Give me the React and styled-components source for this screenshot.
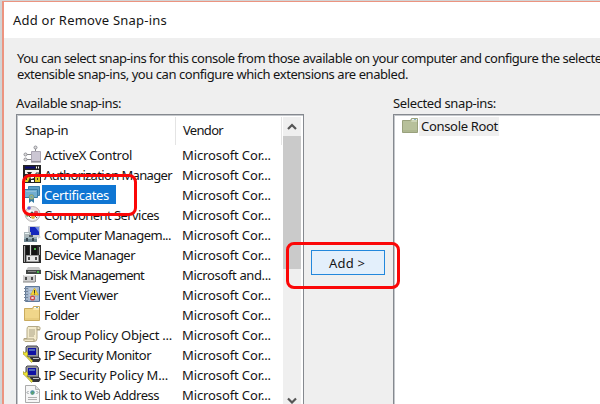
import React, { useLayoutEffect, useRef } from 'react';
import styled, { createGlobalStyle } from 'styled-components';

const GlobalStyle = createGlobalStyle`
  * { box-sizing: border-box; }
  body { margin: 0; background: #d4d4d4; overflow: hidden; }
`;

const Screen = styled.div`
  position: relative;
  width: 600px;
  height: 404px;
  overflow: hidden;
  padding: 1px 0 0 2px;
  background: #d2d4d5;
  font-family: 'Noto Sans', 'Open Sans', sans-serif;
  font-size: 13px;
  color: #151515;
`;

const Dialog = styled.main`
  display: flex;
  flex-direction: column;
  height: 403px;
  border: solid #ec9480;
  border-width: 1px 0 0 2px;
  background: #efefef;
`;

const TitleBar = styled.header`
  flex: none;
  height: 36px;
  padding: 9px 0 0 9px;
  background: #fff;
  line-height: 18px;
`;

const Intro = styled.section`
  flex: none;
  height: 57px;
  padding: 13px 0 0 13px;
  line-height: 15.5px;
`;

const Columns = styled.section`
  flex: 1;
  display: grid;
  grid-template-columns: 288px 89px 220px;
  padding-left: 12px;
  min-height: 0;
`;

const Column = styled.div`
  display: flex;
  flex-direction: column;
  min-height: 0;
`;

const Label = styled.div`
  flex: none;
  height: 19px;
  line-height: 17px;
`;

const ListBox = styled.div`
  flex: 1;
  display: flex;
  min-height: 0;
  overflow: hidden;
  border: solid #85898f;
  border-width: 1px 1px 0 1px;
  box-shadow: inset 1px 1px 0 #c5c8cc;
  background: #fff;
`;

const Table = styled.div`
  flex: none;
  width: 266px;
  padding-top: 2px;
`;

const HeaderRow = styled.div`
  display: grid;
  grid-template-columns: 159px 106px;
  height: 28px;
  line-height: 27px;
`;

const HeaderCell = styled.div`
  padding-left: ${(p) => p.$indent}px;
  border-right: 1px solid #e4e4e4;
`;

const Row = styled.div`
  display: grid;
  grid-template-columns: 19px 140px 1fr;
  height: 20px;
  padding-left: 6px;
  align-items: start;
  justify-items: start;
  line-height: 21px;
`;

const Name = styled.span`
  height: 19px;
  padding: 0 ${(p) => (p.$selected ? 7 : 0)}px 0 2px;
  color: ${(p) => (p.$selected ? '#fff' : 'inherit')};
  background: ${(p) => (p.$selected ? '#0f76d3' : 'transparent')};
`;

const Line = styled.span`
  display: inline-block;
  white-space: pre;
`;

const ScrollBar = styled.div`
  flex: none;
  width: 18px;
  height: 293px;
  margin-top: 2px;
  display: flex;
  flex-direction: column;
  background: #efefef;
`;

const ScrollArrow = styled.div`
  height: 19px;
  display: flex;
  align-items: center;
  justify-content: center;
`;

const Thumb = styled.div`
  height: 133px;
  margin-bottom: auto;
  background: #cacaca;
`;

const Actions = styled.div`
  padding: 155px 0 0 7px;
`;

const AddButton = styled.button`
  display: flex;
  align-items: center;
  justify-content: center;
  width: 74px;
  height: 25px;
  padding: 0 2px 0 0;
  border: 1px solid #2287dc;
  border-radius: 0;
  background: #e3effb;
  font: inherit;
  color: inherit;
`;

const TreeItem = styled.div`
  display: flex;
  height: 19px;
  margin: 2px 0 0 7px;
`;

const TreeLabel = styled.span`
  width: 80px;
  padding-left: 2px;
  line-height: 19px;
  background: #efefef;
`;

const Callout = styled.div`
  position: absolute;
  left: ${(p) => p.$x}px;
  top: ${(p) => p.$y}px;
  width: ${(p) => p.$w}px;
  height: ${(p) => p.$h}px;
  border: 3px solid #fb0707;
  border-radius: 8px;
  pointer-events: none;
`;

const Glyph = styled.svg`
  display: block;
  width: 18px;
  height: 18px;
`;

/* Tracks the text so that it fills the given width. */
function Fit({ width, children }) {
  const ref = useRef(null);
  useLayoutEffect(() => {
    const el = ref.current;
    el.style.letterSpacing = '0px';
    const natural = el.getBoundingClientRect().width;
    el.style.letterSpacing = `${(width - natural) / el.textContent.length}px`;
  }, [width, children]);
  return <Line ref={ref}>{children}</Line>;
}

const ActiveX = () => (
  <Glyph viewBox="0 0 18 18">
    <path d="M12.5 3v4M4 9.500h5M4 14.500h5" stroke="#858589" fill="none" />
    <circle cx="12.500" cy="2.500" r="1.500" fill="#ddd" stroke="#929298" />
    <circle cx="2.500" cy="9.500" r="1.500" fill="#ddd" stroke="#929298" />
    <circle cx="2.500" cy="14.500" r="1.500" fill="#ddd" stroke="#929298" />
    <path d="M8.500 6.500h9v10h-9z" fill="#cbc6d3" stroke="#aaa5b2" />
    <path d="M8 17h10" stroke="#77737c" />
  </Glyph>
);

const Authorization = () => (
  <Glyph viewBox="0 0 18 18">
    <path d="M0 0h18v18H0z" fill="#242424" />
    <path d="M2 5h14v4H2z" fill="#f3f3ed" />
    <path d="M2 1.500h10v2H2z" fill="#090975" />
    <path d="M13 1.500h1v2h-1zM15 1.500h1v2h-1z" fill="#fff" />
    <path d="M4 7h5l-2 3h3l-3 2z" fill="#222" />
    <path d="M1 12l4-2 2 2-2 5H2zM12 11h5v6h-5z" fill="#dec928" />
    <path d="M7 11l4-1v3l-3 1zM8 15h3v2H8z" fill="#fff" />
    <path d="M13 11V8h3v3" fill="none" stroke="#333" />
    <path d="M14 13h1v2h-1zM3 13h1v2H3z" fill="#333" />
  </Glyph>
);

const Certificate = () => (
  <Glyph viewBox="0 0 18 18">
    <path d="M5.500 1.500h11v9h-11z" fill="#5b9ec4" stroke="#3c7fa8" />
    <path d="M1.500 4.500h13v8h-13z" fill="#71aed0" stroke="#397ca4" />
    <path d="M3 6h10v1H3z" fill="#8fc0da" />
    <path d="M6 12v6l2.500-2 2.500 2v-6z" fill="#347aa1" />
    <circle cx="8.500" cy="12" r="2.500" fill="#a9b878" stroke="#5f8f8a" strokeWidth=".7" />
    <circle cx="8.500" cy="12" r="1.200" fill="#69a4b7" />
  </Glyph>
);

const Component = () => (
  <Glyph viewBox="0 0 18 18">
    <circle cx="9.500" cy="9" r="7.500" fill="#e5e3e3" stroke="#b9b7b7" />
    <path d="M4 7l3-2 5 1 3 3-2 5-5 1-4-3z" fill="#fff" />
    <circle cx="6" cy="3" r="1.800" fill="#6d61cb" />
    <circle cx="4.500" cy="10.500" r="1.300" fill="#65b05c" />
    <circle cx="13" cy="8" r="2.300" fill="#d15262" />
    <circle cx="10" cy="12" r="2" fill="#dfb34c" />
    <circle cx="9" cy="8" r="1.500" fill="#555" />
    <path d="M6 11l2 2m4-2 2 2" stroke="#555" />
  </Glyph>
);

const Computer = () => (
  <Glyph viewBox="0 0 18 18">
    <path d="M5 1h12v11H5z" fill="#c9cbd1" />
    <path d="M7 2h9v8H7z" fill="#1526bc" />
    <path d="M12 2h4v5z" fill="#718be1" />
    <path d="M1 7h7v5H1z" fill="#abb6ba" />
    <path d="M2 8h4v1H2z" fill="#e8f2f2" />
    <path d="M6 10h4v2H6z" fill="#535c64" />
    <path d="M1 12h13v5H1z" fill="#6c8490" />
    <path d="M1 12h13v2H1z" fill="#9db1b8" />
    <path d="M3 13h2v3H3zM9 13h2v3H9z" fill="#36444e" />
    <path d="M14 10l4 2-3 2z" fill="#ced0d2" />
  </Glyph>
);

const Device = () => (
  <Glyph viewBox="0 0 18 18">
    <path d="M0 0h18v18H0z" fill="#2b2b2b" />
    <path d="M1 1h1v16H1zM16 2h1v8h-1z" fill="#aaa" />
    <path d="M7 0h1v10H7z" fill="#ddd" />
    <path d="M3 1h3v9H3zM9 1h5v9H9z" fill="#151515" />
    <path d="M11 3h2v2h-2z" fill="#47ad47" />
    <path d="M3.500 10.500h12v6h-12z" fill="#e6e6e6" stroke="#9a9a9a" />
    <path d="M5 12h2v3H5zM12 12h2v3h-2z" fill="#4e4e4e" />
  </Glyph>
);

const Disk = () => (
  <Glyph viewBox="0 0 18 18">
    <path d="M5 2h11l2 3H3z" fill="#c7c7c7" />
    <path d="M3 5h15v4H3z" fill="#434746" />
    <path d="M5 6h8v1H5z" fill="#888" />
    <path d="M14 6h2v2h-2z" fill="#45bb48" />
    <path d="M0 10h12v7H0z" fill="#cecece" />
    <path d="M1 10h10v1H1z" fill="#eee" />
    <path d="M2 12h2v3H2zM8 12h2v3H8z" fill="#4e4e4e" />
    <path d="M0 17h12M12.500 10v7" stroke="#858585" />
  </Glyph>
);

const EventLog = () => (
  <Glyph viewBox="0 0 18 18">
    <path d="M2.500 1.500h14v15h-14z" fill="#a3b5cc" stroke="#627b9b" />
    <path d="M6 4h8M6 7h8M6 10h8M6 13h8" stroke="#d0dae5" />
    <path d="M16.500 2v14" stroke="#466692" />
    <path d="M1 3.500h4M1 6.500h4M1 9.500h4M1 12.500h4M1 15.500h4" stroke="#74859a" />
    <path d="M11.500 3l4 7h-8z" fill="#f5d536" stroke="#c6a827" strokeWidth=".6" />
    <path d="M11.500 5v3m0 .5v1" stroke="#333" />
    <circle cx="9.500" cy="13" r="2.600" fill="#cb4c50" />
    <path d="M8.500 12l2 2m0-2-2 2" stroke="#fff" />
  </Glyph>
);

const Folder = ({ green }) => (
  <Glyph viewBox="0 0 18 18">
    <path
      d="M1.500 3.500h8l1-2h6v14h-15z"
      fill={green ? '#b7c09a' : '#f0d68a'}
      stroke={green ? '#99a17c' : '#c9ab5e'}
    />
    <path d="M2 5h8l1-2h5v2H2z" fill={green ? '#cdd5b8' : '#faebb3'} />
    <path d="M11 2h5v1h-5z" fill={green ? '#edf4f5' : '#fff'} />
    <path d="M13 2h2v1h-2z" fill="#7eafc1" />
    <path d="M2 14h14" stroke={green ? '#a5ae87' : '#e0c273'} />
  </Glyph>
);

const Scroll = () => (
  <Glyph viewBox="0 0 18 18">
    <path d="M5 1.500h10q3 0 2 3h-3v9q0 3-3 3H2q-2-1-1-3h3v-9q0-2 1-3z" fill="#f3eacb" stroke="#b4a986" />
    <path d="M14 2v3h3M1 14h10v2" fill="none" stroke="#a99f80" />
    <path d="M6 5h6M6 7h6M6 9h6M6 11h5" stroke="#aaa286" />
  </Glyph>
);

const IpSecurity = () => (
  <Glyph viewBox="0 0 18 18">
    <path d="M4 1h10l1.500 2v9H5L3 10V2z" fill="#96979b" stroke="#4b4b52" />
    <path d="M5 3h8v7H5z" fill="#1012a4" />
    <path d="M6 4h6v2H6z" fill="#4d64bb" />
    <path d="M7 12h9l2 2-2 3H8z" fill="#34343a" />
    <path d="M10 13h6v1h-6z" fill="#bdbdc1" />
    <path d="M0 9V6.500l2 1.500 1.500-2 1.500 3-1 2 6 5-1.500 1.500L2.500 11z" fill="#efe336" stroke="#75701f" strokeWidth=".5" />
  </Glyph>
);

const WebLink = () => (
  <Glyph viewBox="0 0 18 18">
    <path d="M2.500 .5h10l4 4v13h-14z" fill="#f6f6f6" stroke="#ababab" />
    <path d="M12.500 .5v4h4" fill="#ddd" stroke="#b4b4b4" />
    <circle cx="9.500" cy="7.500" r="2.200" fill="#4c91ad" />
    <path d="M8 8l2-2 1 2-2 2z" fill="#60a267" />
    <path d="M5.500 6L4 7.500 5.500 9m8-3L15 7.500 13.500 9" fill="none" stroke="#8c9396" />
    <path d="M5 12.500h9M5 14.500h9" stroke="#b0b0b0" />
  </Glyph>
);

const Chevron = ({ down }) => (
  <svg width="10" height="8" viewBox="0 0 10 8">
    <path
      d={down ? 'M1 1.500l4 4 4-4' : 'M1 6l4-4 4 4'}
      fill="none"
      stroke="#555"
      strokeWidth="2.200"
    />
  </svg>
);

const snapIns = [
  { icon: ActiveX, name: 'ActiveX Control', width: 88 },
  { icon: Authorization, name: 'Authorization Manager', width: 128 },
  { icon: Certificate, name: 'Certificates', width: 65, selected: true },
  { icon: Component, name: 'Component Services', width: 115 },
  { icon: Computer, name: 'Computer Managem...', width: 127 },
  { icon: Device, name: 'Device Manager', width: 91 },
  { icon: Disk, name: 'Disk Management', width: 100, vendor: 'Microsoft and...' },
  { icon: EventLog, name: 'Event Viewer', width: 74 },
  { icon: Folder, name: 'Folder', width: 35 },
  { icon: Scroll, name: 'Group Policy Object ...', width: 128 },
  { icon: IpSecurity, name: 'IP Security Monitor', width: 107 },
  { icon: IpSecurity, name: 'IP Security Policy M...', width: 124 },
  { icon: WebLink, name: 'Link to Web Address', width: 115 },
];

export default function App() {
  return (
    <Screen>
      <GlobalStyle />
      <Dialog>
        <TitleBar>
          <Fit width={154}>Add or Remove Snap-ins</Fit>
        </TitleBar>
        <Intro>
          <Fit width={592}>
            You can select snap-ins for this console from those available on your computer and configure the selected
          </Fit>
          <Fit width={391}>extensible snap-ins, you can configure which extensions are enabled.</Fit>
        </Intro>
        <Columns>
          <Column>
            <Label>
              <Fit width={105}>Available snap-ins:</Fit>
            </Label>
            <ListBox>
              <Table>
                <HeaderRow>
                  <HeaderCell $indent={8}>
                    <Fit width={43}>Snap-in</Fit>
                  </HeaderCell>
                  <HeaderCell $indent={7}>
                    <Fit width={40}>Vendor</Fit>
                  </HeaderCell>
                </HeaderRow>
                {snapIns.map(({ icon: Icon, name, width, vendor, selected }) => (
                  <Row key={name}>
                    <Icon />
                    <Name $selected={selected}>
                      <Fit width={width}>{name}</Fit>
                    </Name>
                    <Fit width={89}>{vendor || 'Microsoft Cor...'}</Fit>
                  </Row>
                ))}
              </Table>
              <ScrollBar>
                <ScrollArrow>
                  <Chevron />
                </ScrollArrow>
                <Thumb />
                <ScrollArrow>
                  <Chevron down />
                </ScrollArrow>
              </ScrollBar>
            </ListBox>
          </Column>
          <Actions>
            <AddButton>
              <Fit width={36}>{'Add >'}</Fit>
            </AddButton>
          </Actions>
          <Column>
            <Label>
              <Fit width={103}>Selected snap-ins:</Fit>
            </Label>
            <ListBox>
              <TreeItem>
                <Folder green />
                <TreeLabel>
                  <Fit width={77}>Console Root</Fit>
                </TreeLabel>
              </TreeItem>
            </ListBox>
          </Column>
        </Columns>
      </Dialog>
      <Callout $x={22} $y={174} $w={115} $h={42} />
      <Callout $x={286} $y={242} $w={114} $h={47} />
    </Screen>
  );
}
